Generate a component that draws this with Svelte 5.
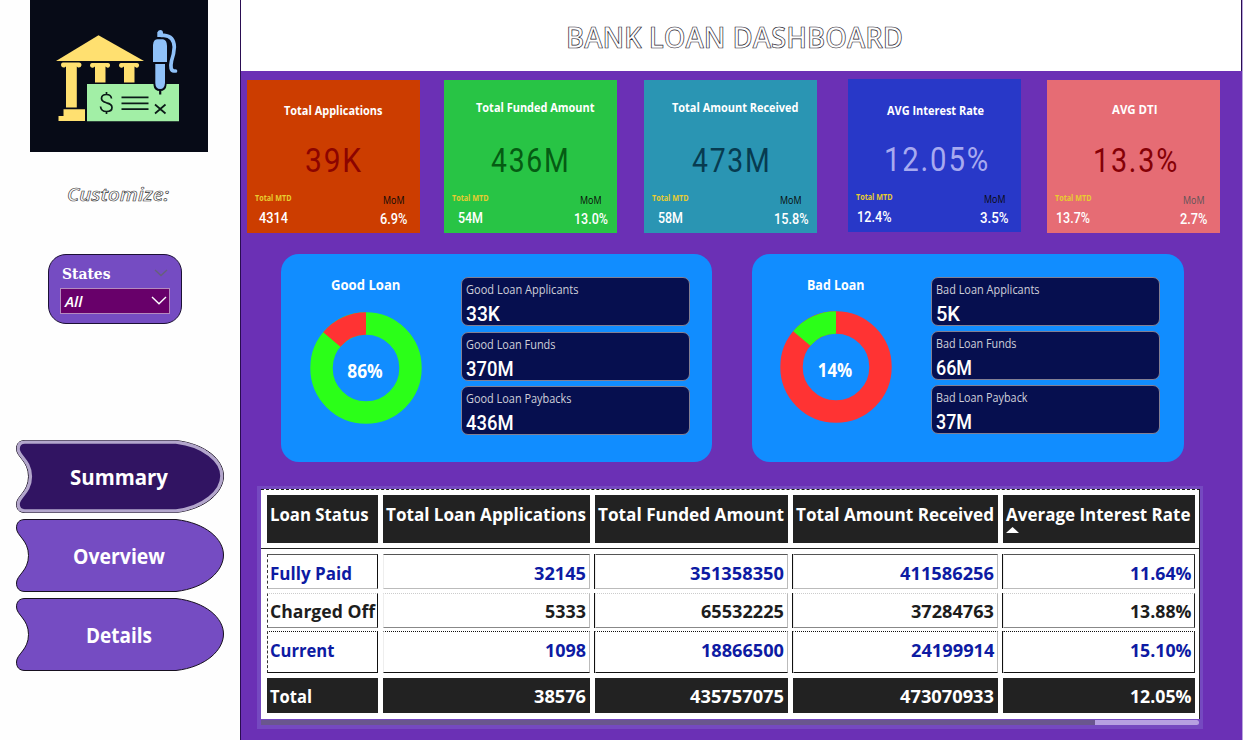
<script>
  const nav = [
    { name: 'Summary', w: 98, active: true },
    { name: 'Overview', w: 92 },
    { name: 'Details', w: 66 }
  ];

  const kpis = [
    { id: 'apps', title: 'Total Applications', tw: 98.5, value: '39K', vw: 58, mtd: '4314', mw: 29, mom: '6.9%', cw: 27.5 },
    { id: 'funded', title: 'Total Funded Amount', tw: 118.5, value: '436M', vw: 79.5, mtd: '54M', mw: 25, mom: '13.0%', cw: 34 },
    { id: 'received', title: 'Total Amount Received', tw: 126.5, value: '473M', vw: 79.5, mtd: '58M', mw: 25, mom: '15.8%', cw: 34.5 },
    { id: 'rate', title: 'AVG Interest Rate', tw: 97, value: '12.05%', vw: 106, mtd: '12.4%', mw: 34.5, mom: '3.5%', cw: 28.5 },
    { id: 'dti', title: 'AVG DTI', tw: 45.5, value: '13.3%', vw: 86, mtd: '13.7%', mw: 34, mom: '2.7%', cw: 27.5 }
  ];

  const loans = [
    {
      id: 'good', title: 'Good Loan', tw: 69.5, pct: '86%', pw: 35.5,
      tiles: [['Good Loan Applicants', 112.5, '33K', 34], ['Good Loan Funds', 89.5, '370M', 47.5], ['Good Loan Paybacks', 105.5, '436M', 47.5]]
    },
    {
      id: 'bad', title: 'Bad Loan', tw: 57.5, pct: '14%', pw: 34.5,
      tiles: [['Bad Loan Applicants', 103.5, '5K', 24], ['Bad Loan Funds', 80.5, '66M', 36], ['Bad Loan Payback', 91.5, '37M', 36]]
    }
  ];

  const head = [['Loan Status', 98.5], ['Total Loan Applications', 200], ['Total Funded Amount', 186], ['Total Amount Received', 198], ['Average Interest Rate', 184.5]];
  const rows = [
    { kind: 'blue', cells: [['Fully Paid', 82], ['32145', 52], ['351358350', 94], ['411586256', 94], ['11.64%', 61.5]] },
    { kind: 'dark', cells: [['Charged Off', 105], ['5333', 41], ['65532225', 83], ['37284763', 83], ['13.88%', 61.5]] },
    { kind: 'blue last', cells: [['Current', 64.5], ['1098', 41], ['18866500', 83], ['24199914', 83.5], ['15.10%', 61.5]] },
    { kind: 'total', cells: [['Total', 42], ['38576', 52], ['435757075', 94], ['473070933', 94], ['12.05%', 61.5]] }
  ];
</script>

{#snippet label(text, w, h, cls)}
  <svg class="label {cls}" width={w} height={h}><text x="0" y={h} textLength={w} lengthAdjust="spacingAndGlyphs">{text}</text></svg>
{/snippet}

<div class="page">
  <aside>
    <div class="logo">
      <svg width="178" height="152" viewBox="30 0 178 152">
        <g fill="#ffe070">
          <path d="M56 61 98.5 35.3 144 61Z" />
          <path d="M63 62.5H79Q81.5 62.5 81.5 65.3 81 68 78 67.5L76.8 66.5V107.5H66V66.5L64.5 67.5Q61.5 68 61 65.3 61 62.5 63 62.5Z" />
          <path d="M92 63H108Q110.300 63 110 66 109 68.500 107 67.500L105.500 66.500V82.500H95V66.500L93.500 67.500Q91 68.500 90 66 90 63 92 63Z" />
          <path d="M121 63H137Q139.300 63 139 66 138 68.500 136 67.500L134.500 66.500V82.500H124V66.500L122.500 67.500Q120 68.500 119 66 119 63 121 63Z" />
          <path d="M63.500 109.300H85V121H58.500V116H63.500Z" />
        </g>
        <path d="M87 84H179V121.300H87Z" fill="#a2efa6" />
        <path d="M153.500 82H166.500V85Q166 91 160 91 154 91 153.500 85Z" fill="#070b17" />
        <path d="M160.200 89V94.500" stroke="#070b17" stroke-width="2.200" />
        <g fill="#8fc1f8">
          <path d="M153 62V45Q153.500 39.500 157 39.300H163Q167 40 167 46V62Z" />
          <path d="M155.300 64H165V83Q164.500 89 160.200 89 155.500 89 155.300 83Z" />
          <path d="M157.300 37V32.500Q158 30 160.200 30 163 30 163 33V37Z" />
        </g>
        <path d="M161 35.300H164Q174 36 174.300 47 174 54 171.500 61 169.500 70.500 174 71H175.500" fill="none" stroke="#8fc1f8" stroke-width="3.700" stroke-linecap="round" />
        <path d="M111.500 98.500Q111 94.500 106.500 94.500 101.500 94.500 101.500 98.500 101.500 101.500 106.500 102.800 112 104 112 107.500 112 111.500 106.500 111.500 101 111.500 100.500 106.500M106.500 92V94.500M106.500 111.500V114M121.500 97.300H148.500M121.500 103.300H148.500M121.500 109.200H148.500M155 104.500 165.500 113.500M165.500 104.500 155 113.500" fill="none" stroke="#0b1a18" stroke-width="1.700" />
      </svg>
    </div>
    <div class="customize">{@render label('Customize:', 102, 14, 'ghost-small')}</div>

    <div class="slicer">
      <div class="slicer-head">
        {@render label('States', 48.5, 11, 'states')}
        <svg width="14" height="8"><path d="M1 1 7 6.500 13 1" fill="none" stroke="#66617a" stroke-width="1.400" /></svg>
      </div>
      <div class="select">
        {@render label('All', 17.5, 11, 'all')}
        <svg width="16" height="9"><path d="M1 1 8 7.800 15 1" fill="none" stroke="#fff" stroke-width="1.400" /></svg>
      </div>
    </div>

    <nav>
      {#each nav as n}
        <div class="tab" class:active={n.active}>
          <svg class="shape" width="208" height="73">
            <path d="M9 .5H160C190 4 207.500 20 207.500 36 207.500 52 190 69 160 72.500H9C3 72.500 .5 69 .5 64 .5 56 12.500 52 12.500 36.500 12.500 21 .5 17 .5 9 .5 4 3 .5 9 .5Z" />
            {#if n.active}
              <path class="ring" d="M9 2.200H160C188 5.500 205.800 21 205.800 36 205.800 51 188 67.500 160 70.800H9C4 70.800 2.200 68 2.200 64 2.200 57 14.500 52 14.500 36.500 14.500 21 2.200 16 2.200 9 2.200 5 4 2.200 9 2.200Z" />
            {/if}
          </svg>
          {@render label(n.name, n.w, 15, 'tab-text')}
        </div>
      {/each}
    </nav>
  </aside>

  <main>
    <header>{@render label('BANK LOAN DASHBOARD', 337, 21, 'ghost')}</header>

    <section class="kpis">
      {#each kpis as k}
        <article class="kpi {k.id}">
          <div class="kpi-title">{@render label(k.title, k.tw, 9, 'kt')}</div>
          <div class="kpi-value">{@render label(k.value, k.vw, 23, 'kv')}</div>
          <div class="kpi-foot">
            <div class="left">
              {@render label('Total MTD', 36.5, 6, 'mtd')}
              {@render label(k.mtd, k.mw, 10, 'num')}
            </div>
            <div class="right">
              {@render label('MoM', 21.5, 7, 'mom')}
              {@render label(k.mom, k.cw, 10, 'num')}
            </div>
          </div>
        </article>
      {/each}
    </section>

    <section class="loans">
      {#each loans as l}
        <article class="loan {l.id}">
          <div class="gauge">
            {@render label(l.title, l.tw, 10, 'lt')}
            <svg class="donut" width="112" height="112" viewBox="-56 -56 112 112">
              <circle class="main-arc" r="44.500" />
              <path class="slice" d="M0 -44.500A44.500 44.500 0 0 0 -34.200 -28.500" />
              <text x="-1" y="9.500" text-anchor="middle" textLength={l.pw} lengthAdjust="spacingAndGlyphs">{l.pct}</text>
            </svg>
          </div>
          <div class="tiles">
            {#each l.tiles as t}
              <div class="tile">
                {@render label(t[0], t[1], 9, 'tile-name')}
                {@render label(t[2], t[3], 14, 'tile-value')}
              </div>
            {/each}
          </div>
        </article>
      {/each}
    </section>

    <section class="table-frame">
      <div class="table">
        <div class="row head">
          {#each head as h, i}
            <div class="cell">
              {@render label(h[0], h[1], 13, 'th')}
              {#if i === 4}<svg class="sort" width="13" height="6"><path d="M0 6 6.500 0 13 6Z" fill="#fff" /></svg>{/if}
            </div>
          {/each}
        </div>
        <div class="body">
          {#each rows as r}
            <div class="row {r.kind}">
              {#each r.cells as c}
                <div class="cell">{@render label(c[0], c[1], 13, 'td')}</div>
              {/each}
            </div>
          {/each}
        </div>
      </div>
      <div class="scroll"><div class="thumb"></div></div>
    </section>
  </main>
</div>

<style>
  :global(body) { margin: 0; background: #fff; }
  .page { display: flex; width: 1243px; height: 740px; overflow: hidden; font-family: "Open Sans", "Noto Sans", sans-serif; }
  svg { display: block; flex: none; }
  .label { overflow: visible; }
  aside { box-sizing: border-box; width: 241px; height: 740px; border-right: 1px solid #2a0d52; background: #fefefe; flex: none; }
  .logo { width: 178px; height: 152px; margin-left: 30px; background: #070b17; }
  .customize { padding: 35px 0 0 67px; height: 68px; box-sizing: border-box; }
  .ghost-small { font: italic 600 18.500px "Open Sans", sans-serif; fill: #fff; stroke: #333; stroke-width: .6px; }

  .slicer { box-sizing: border-box; width: 134px; height: 70px; margin: 34px 0 0 48px; padding: 13px 11px 0 12px; background: #754cc2; border: 1px solid #1c1035; border-radius: 18px; }
  .slicer-head { display: flex; justify-content: space-between; padding: 0 2px 0 1px; height: 20px; }
  .slicer-head svg:last-child { margin-top: 1px; }
  .states { font: bold 15.500px "DejaVu Serif", serif; fill: #fff; }
  .select { box-sizing: border-box; display: flex; justify-content: space-between; width: 110px; height: 26px; margin-left: -1px; padding: 7px 2px 0 4px; border: 1px solid #b48abf; background: #68006a; }
  .all { font: italic 600 15px "Open Sans", sans-serif; fill: #fff; }

  nav { display: flex; flex-direction: column; gap: 6px; margin: 116px 0 0 16px; }
  .tab { display: grid; width: 208px; height: 73px; place-items: center; }
  .tab > :global(svg) { grid-area: 1 / 1; }
  .shape path { fill: #754cc2; stroke: #17101f; stroke-width: 1; }
  .active .shape path { fill: #b3a6cc; }
  .active .shape .ring { fill: #311462; stroke: #b3a6cc; stroke-width: 3.200; }
  .tab-text { font-weight: 700; font-size: 20.500px; fill: #fff; margin-left: -2px; margin-top: 2px; }

  main { width: 1001px; height: 740px; background: #6b30b5; border-right: 1px solid #b7a5dc; flex: none; }
  header { box-sizing: border-box; height: 71px; padding: 27px 0 0 325px; background: #fff; border-right: 1px solid #2a0d52; }
  .ghost { font: 600 29px "Open Sans", sans-serif; fill: #fff; stroke: #2a2630; stroke-width: .7px; }

  .kpis { display: grid; grid-template-columns: 173px 176px 180px 175px 173px; column-gap: 24px; padding: 9px 0 0 6px; }
  .kpi { box-sizing: border-box; width: 173px; height: 153px; color: #fff; }
  .apps { background: #cc3d00; --value: #8c0400; }
  .funded { background: #28c445; --value: #055c13; }
  .received { background: #2a95b3; --value: #073b50; }
  .rate { background: #2838c8; --value: #a7aaf0; margin-top: -1px; }
  .dti { background: #e66c74; --value: #850006; }
  .kpi-title { display: flex; justify-content: center; height: 43px; padding-top: 26px; }
  .funded .kpi-title, .received .kpi-title { height: 46px; padding: 23px 0 0 9px; }
  .rate .kpi-title { height: 42px; padding: 27px 0 0 2px; }
  .dti .kpi-title { height: 44px; padding: 25px 0 0 2px; }
  .kt { font-weight: 700; font-size: 12px; fill: #fff; }
  .kpi-value { display: flex; justify-content: center; height: 23px; }
  .rate .kpi-value, .dti .kpi-value { padding-left: 4px; }
  .received .kpi-value { padding-left: 2px; }
  .kv { font: 400 32.500px Roboto, sans-serif; letter-spacing: 2px; fill: var(--value); }
  .kpi-foot { display: flex; justify-content: space-between; padding: 23px 13px 0 8px; }
  .left, .right { display: flex; flex-direction: column; }
  .right { align-items: flex-end; padding-top: 2px; }
  .left .num { margin: 12px 0 0 4px; }
  .right .num { margin-top: 10px; }
  .funded .left .num, .received .left .num { margin-left: 6px; }
  .rate .left .num, .dti .left .num { margin-left: 1px; }
  .funded .kpi-foot, .received .kpi-foot { padding-right: 9px; }
  .right .mom { margin-right: 3px; }
  .funded .right .mom, .received .right .mom { margin-right: 7px; }
  .mtd { font-weight: 700; font-size: 8.500px; fill: #e8cc30; }
  .mom { font-size: 10.500px; fill: #080808; }
  .dti .mom { fill: #5c5357; }
  .num { font: 500 14px Roboto, sans-serif; fill: #fff; }

  .loans { display: flex; gap: 40px; padding: 21px 0 0 40px; }
  .loan { box-sizing: border-box; display: flex; width: 431px; height: 208px; padding-top: 23px; border-radius: 18px; background: #118dff; --main: #2bff18; --slice: #ff3333; }
  .bad { width: 432px; --main: #ff3333; --slice: #2bff18; }
  .gauge { display: flex; flex-direction: column; align-items: center; width: 169px; margin-right: 11px; padding-top: 3px; }
  .bad .gauge { width: 168px; margin-right: 11px; }
  .lt { font-weight: 700; font-size: 14px; fill: #fff; }
  .donut { margin-top: 22px; }
  .bad .donut { margin-top: 21px; }
  .main-arc, .slice { fill: none; stroke-width: 22.400; }
  .main-arc { stroke: var(--main); }
  .slice { stroke: var(--slice); }
  .donut text { font: bold 19.500px "Open Sans", sans-serif; fill: #fff; }
  .tiles { display: flex; flex-direction: column; gap: 5.500px; }
  .bad .tiles { gap: 5px; }
  .tile { box-sizing: border-box; width: 229px; height: 49px; padding: 7px 0 0 4px; border: 1px solid #827f94; border-radius: 7px; background: #060f4f; }
  .tile-name { font-size: 12px; fill: #cfcfda; }
  .tile-value { margin-top: 13px; font: 500 19.500px Roboto, sans-serif; fill: #fff; }

  .table-frame { box-sizing: border-box; width: 946px; height: 243px; margin: 24px 0 0 16px; padding: 3px 4px 0; background: #7549c0; }
  .table { box-sizing: border-box; width: 939px; height: 230px; background: #fff; border-top: 1px dashed #151515; border-right: 1px solid #222; }
  .row { display: grid; grid-template-columns: 111px 207px 193px 205px 192px; column-gap: 5px; padding-left: 6px; }
  .cell { box-sizing: border-box; padding: 0 3px; }
  .head { height: 59px; box-sizing: border-box; padding-top: 5px; border-bottom: 1px solid #222; }
  .head .cell { height: 48px; padding-top: 13px; background: #222; }
  .th, .td { font-weight: 700; font-size: 18px; }
  .th { fill: #fff; }
  .sort { margin-top: 6px; }
  .body { padding-top: 5px; }
  .body .cell { display: flex; justify-content: flex-end; height: 35px; padding-top: 12px; border: 1px solid #bbb; border-top-color: #555; border-left-color: #eee; }
  .body .cell:first-child { justify-content: flex-start; border-right-color: #111; border-left: 1px dashed #333; padding-left: 2px; }
  .body .cell:last-child { border-right-color: #222; }
  .body .dark .cell { border-top: 1px dotted #ccc; border-bottom-color: #888; padding-top: 11px; }
  .body .dark { margin-top: 4px; }
  .body .last { margin-top: 3px; }
  .body .last .cell { height: 42px; border-top: 1px dotted #111; border-bottom-color: #111; padding-top: 12px; }
  .blue { fill: #0d1ba3; }
  .dark { fill: #1d1d1d; }
  .total { fill: #fff; margin-top: 5px; }
  .body .total .cell { height: 35px; background: #222; border-color: #222; padding-top: 11px; }
  .body .row:not(.total) .cell:nth-child(n + 3) { box-shadow: -1px 0 #111; }
  .scroll { width: 938px; height: 5px; margin-top: 1px; background: #b6a0e1; border-radius: 3px; }
  .thumb { width: 834px; height: 5px; background: #6a568e; }
</style>
